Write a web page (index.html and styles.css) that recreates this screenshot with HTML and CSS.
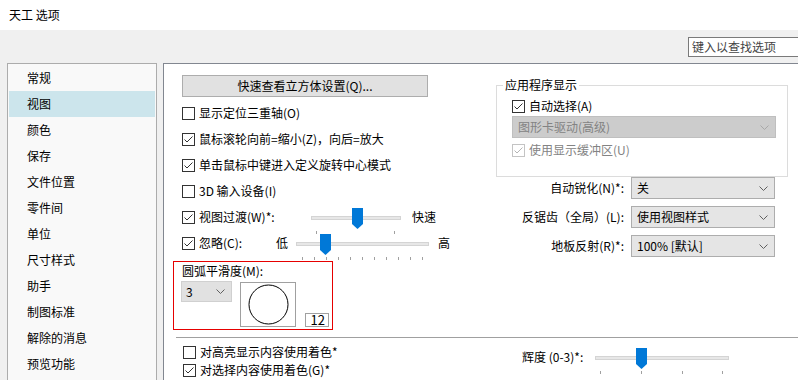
FILE: index.html
```html
<!DOCTYPE html>
<html lang="zh-CN">
<head>
  <meta charset="UTF-8">
  <title>天工 选项</title>
  <link rel="stylesheet" href="styles.css">
</head>
<body>

  <div class="titlebar">天工 选项</div>
  <div class="toolbar">
    <div class="search">键入以查找选项</div>
  </div>

  <div class="content">
    <ul class="nav">
      <li>常规</li>
      <li class="active">视图</li>
      <li>颜色</li>
      <li>保存</li>
      <li>文件位置</li>
      <li>零件间</li>
      <li>单位</li>
      <li>尺寸样式</li>
      <li>助手</li>
      <li>制图标准</li>
      <li>解除的消息</li>
      <li>预览功能</li>
    </ul>

    <div class="panel">
      <div class="cols">
        <div class="col-left">
          <div class="btn">快速查看立方体设置(Q)...</div>
          <div class="checks">
            <div class="check-row">
              <svg class="cb" width="13" height="13"><rect x="0.5" y="0.5" width="12" height="12" fill="#fff" stroke="#333"/></svg>
              <span>显示定位三重轴(O)</span>
            </div>
            <div class="check-row">
              <svg class="cb" width="13" height="13"><rect x="0.5" y="0.5" width="12" height="12" fill="#fff" stroke="#333"/><path d="M2.5 6.5 L5 9 L10.5 3.5" fill="none" stroke="#333"/></svg>
              <span>鼠标滚轮向前=缩小(Z)，向后=放大</span>
            </div>
            <div class="check-row">
              <svg class="cb" width="13" height="13"><rect x="0.5" y="0.5" width="12" height="12" fill="#fff" stroke="#333"/><path d="M2.5 6.5 L5 9 L10.5 3.5" fill="none" stroke="#333"/></svg>
              <span>单击鼠标中键进入定义旋转中心模式</span>
            </div>
            <div class="check-row">
              <svg class="cb" width="13" height="13"><rect x="0.5" y="0.5" width="12" height="12" fill="#fff" stroke="#333"/></svg>
              <span>3D 输入设备(I)</span>
            </div>
            <div class="check-row">
              <svg class="cb" width="13" height="13"><rect x="0.5" y="0.5" width="12" height="12" fill="#fff" stroke="#333"/><path d="M2.5 6.5 L5 9 L10.5 3.5" fill="none" stroke="#333"/></svg>
              <span class="lbl-transition">视图过渡(W)*:</span>
              <svg class="slider" width="90" height="36">
                <rect x="0.5" y="17.5" width="89" height="3" fill="#e7e7e7" stroke="#d4d4d4"/>
                <rect x="5" y="32" width="1" height="3" fill="#a0a0a0"/>
                <rect x="83" y="32" width="1" height="3" fill="#a0a0a0"/>
                <polygon points="41,9 52,9 52,25 46.5,30 41,25" fill="#0078d7"/>
              </svg>
              <span class="after">快速</span>
            </div>
            <div class="check-row">
              <svg class="cb" width="13" height="13"><rect x="0.5" y="0.5" width="12" height="12" fill="#fff" stroke="#333"/><path d="M2.5 6.5 L5 9 L10.5 3.5" fill="none" stroke="#333"/></svg>
              <span class="lbl-ignore">忽略(C):</span>
              <span class="before">低</span>
              <svg class="slider" width="133" height="36">
                <rect x="0.5" y="17.5" width="132" height="3" fill="#e7e7e7" stroke="#d4d4d4"/>
                <rect x="6" y="32" width="1" height="3" fill="#a0a0a0"/>
                <rect x="18" y="32" width="1" height="3" fill="#a0a0a0"/>
                <rect x="30" y="32" width="1" height="3" fill="#a0a0a0"/>
                <rect x="42" y="32" width="1" height="3" fill="#a0a0a0"/>
                <rect x="54" y="32" width="1" height="3" fill="#a0a0a0"/>
                <rect x="66" y="32" width="1" height="3" fill="#a0a0a0"/>
                <rect x="78" y="32" width="1" height="3" fill="#a0a0a0"/>
                <rect x="90" y="32" width="1" height="3" fill="#a0a0a0"/>
                <rect x="102" y="32" width="1" height="3" fill="#a0a0a0"/>
                <rect x="114" y="32" width="1" height="3" fill="#a0a0a0"/>
                <rect x="126" y="32" width="1" height="3" fill="#a0a0a0"/>
                <polygon points="24,9 35,9 35,25 29.5,30 24,25" fill="#0078d7"/>
              </svg>
              <span class="after high">高</span>
            </div>
          </div>

          <div class="arc-box">
            <div class="arc-label">圆弧平滑度(M):</div>
            <div class="arc-row">
              <div class="combo small">
                <span>3</span>
                <svg width="9" height="5"><path d="M0.5 0.5 L4.5 4.5 L8.5 0.5" fill="none" stroke="#606060"/></svg>
              </div>
              <div class="preview">
                <svg width="54" height="43"><circle cx="27.5" cy="21.5" r="19.5" fill="none" stroke="#000"/></svg>
              </div>
              <div class="num">12</div>
            </div>
          </div>
        </div>

        <div class="col-right">
          <fieldset class="group">
            <legend>应用程序显示</legend>
            <div class="fs-row">
              <svg class="cb" width="13" height="13"><rect x="0.5" y="0.5" width="12" height="12" fill="#fff" stroke="#333"/><path d="M2.5 6.5 L5 9 L10.5 3.5" fill="none" stroke="#333"/></svg>
              <span>自动选择(A)</span>
            </div>
            <div class="combo wide">
              <span>图形卡驱动(高级)</span>
              <svg width="9" height="5"><path d="M0.5 0.5 L4.5 4.5 L8.5 0.5" fill="none" stroke="#a8a8a8"/></svg>
            </div>
            <div class="fs-row disabled">
              <svg class="cb" width="13" height="13"><rect x="0.5" y="0.5" width="12" height="12" fill="#fff" stroke="#c4c4c4"/><path d="M2.5 6.5 L5 9 L10.5 3.5" fill="none" stroke="#b4b4b4"/></svg>
              <span>使用显示缓冲区(U)</span>
            </div>
          </fieldset>

          <div class="selects">
            <label>自动锐化(N)*:</label>
            <div class="combo">
              <span>关</span>
              <svg width="9" height="5"><path d="M0.5 0.5 L4.5 4.5 L8.5 0.5" fill="none" stroke="#606060"/></svg>
            </div>
            <label>反锯齿（全局）(L):</label>
            <div class="combo">
              <span>使用视图样式</span>
              <svg width="9" height="5"><path d="M0.5 0.5 L4.5 4.5 L8.5 0.5" fill="none" stroke="#606060"/></svg>
            </div>
            <label>地板反射(R)*:</label>
            <div class="combo">
              <span>100% [默认]</span>
              <svg width="9" height="5"><path d="M0.5 0.5 L4.5 4.5 L8.5 0.5" fill="none" stroke="#606060"/></svg>
            </div>
          </div>
        </div>
      </div>

      <div class="sep"></div>

      <div class="cols bottom">
        <div class="col-left">
          <div class="check-row short">
            <svg class="cb" width="13" height="13"><rect x="0.5" y="0.5" width="12" height="12" fill="#fff" stroke="#333"/></svg>
            <span>对高亮显示内容使用着色*</span>
          </div>
          <div class="check-row short">
            <svg class="cb" width="13" height="13"><rect x="0.5" y="0.5" width="12" height="12" fill="#fff" stroke="#333"/><path d="M2.5 6.5 L5 9 L10.5 3.5" fill="none" stroke="#333"/></svg>
            <span>对选择内容使用着色(G)*</span>
          </div>
        </div>
        <div class="col-right">
          <div class="check-row short">
            <span class="lbl-lum">辉度 (0-3)*:</span>
            <svg class="slider" width="134" height="36">
              <rect x="0.5" y="17.5" width="133" height="3" fill="#e7e7e7" stroke="#d4d4d4"/>
              <rect x="5" y="32" width="1" height="3" fill="#a0a0a0"/>
              <rect x="46" y="32" width="1" height="3" fill="#a0a0a0"/>
              <rect x="87" y="32" width="1" height="3" fill="#a0a0a0"/>
              <rect x="127" y="32" width="1" height="3" fill="#a0a0a0"/>
              <polygon points="41,9 52,9 52,25 46.5,30 41,25" fill="#0078d7"/>
            </svg>
          </div>
        </div>
      </div>
    </div>
  </div>

</body>
</html>
```

FILE: styles.css
```css
* {
  box-sizing: border-box;
  margin: 0;
  padding: 0;
}
html {
  overflow: hidden;
}
body {
  width: 798px;
  height: 380px;
  overflow: hidden;
  background: #f0f0f0;
  color: #000;
  font: 12px/16px "Noto Sans CJK SC", "Microsoft YaHei", sans-serif;
}
.titlebar {
  height: 30px;
  line-height: 30px;
  padding-left: 9px;
  background: #fff;
}
.toolbar {
  height: 33px;
  display: flex;
  justify-content: flex-end;
}
.search {
  margin-top: 7px;
  width: 110px;
  height: 20px;
  line-height: 18px;
  padding-left: 3px;
  border: 1px solid #7a7a7a;
  border-right: 0;
  background: #fff;
  color: #444;
  white-space: nowrap;
  overflow: hidden;
}
.content {
  display: flex;
  gap: 6px;
  height: 317px;
  padding-left: 7px;
}
.nav {
  list-style: none;
  width: 150px;
  flex: none;
  padding: 1px 1px 0;
  border: 1px solid #acacac;
  border-bottom: 0;
  background: #f9f9f9;
}
.nav li {
  height: 26px;
  line-height: 26px;
  padding-left: 18px;
}
.nav li.active {
  background: #cce5ec;
}
.panel {
  flex: 1;
  min-width: 0;
  padding: 11px 0 0 9px;
  border: 1px solid #828790;
  border-right: 0;
  border-bottom: 0;
  background: #fff;
  overflow: hidden;
}
.cols {
  display: grid;
  grid-template-columns: 323px 292px;
}
.col-left {
  padding-left: 9px;
}
.btn {
  width: 246px;
  height: 22px;
  line-height: 20px;
  text-align: center;
  background: #e1e1e1;
  border: 1px solid #adadad;
}
.checks {
  margin-top: 3px;
}
.check-row {
  display: flex;
  align-items: center;
  height: 26px;
}
.check-row.short {
  height: 18px;
}
.cb {
  flex: none;
  margin-right: 4px;
}
.slider {
  flex: none;
}
.lbl-transition {
  width: 112px;
}
.lbl-ignore {
  width: 77px;
}
.before {
  width: 20px;
}
.after {
  margin-left: 11px;
}
.after.high {
  margin-left: 9px;
}

/* arc smoothness box */
.arc-box {
  margin: 5px 0 0 -9px;
  width: 160px;
  height: 69px;
  padding: 1px 0 0 8px;
  border: 1px solid #e60000;
}
.arc-row {
  display: flex;
  align-items: flex-start;
  margin: 2px 0 0 -1px;
}
.combo {
  display: flex;
  align-items: center;
  justify-content: space-between;
  padding: 0 6px 0 5px;
  background: #e5e5e5;
  border: 1px solid #adadad;
}
.combo.small {
  width: 51px;
  height: 21px;
  padding-left: 4px;
  background: #e1e1e1;
  border-color: #d0d0d0;
}
.preview {
  width: 56px;
  height: 45px;
  margin: 1px 0 0 8px;
  border: 1px solid #a0a0a0;
}
.preview svg {
  display: block;
}
.num {
  align-self: flex-end;
  width: 24px;
  height: 14px;
  margin-left: 9px;
  padding-right: 3px;
  border: 1px solid #a0a0a0;
  font-size: 13px;
  line-height: 12px;
  text-align: right;
}

/* right column */
.group {
  margin-top: 2px;
  min-width: 0;
  padding: 0 11px 18px 15px;
  border: 1px solid #dcdcdc;
}
.group legend {
  margin-left: -9px;
  padding: 0 2px;
}
.fs-row {
  display: flex;
  align-items: center;
  height: 16px;
  margin-top: 5px;
}
.combo.wide {
  height: 22px;
  margin-top: 2px;
  background: #cccccc;
  border-color: #bfbfbf;
  color: #838383;
}
.fs-row.disabled {
  margin-top: 4px;
  color: #838383;
}
.selects {
  display: grid;
  grid-template-columns: 128px 144px;
  grid-auto-rows: 22px;
  gap: 7px;
}
.selects label {
  text-align: right;
  line-height: 22px;
}

.sep {
  height: 1px;
  margin: 7px 0 0 3px;
  background: #a0a0a0;
}
.bottom {
  padding-top: 5px;
}
.bottom .col-left {
  padding-left: 10px;
}
.bottom .col-right {
  padding: 5px 0 0 26px;
}
.lbl-lum {
  width: 73px;
}
```
